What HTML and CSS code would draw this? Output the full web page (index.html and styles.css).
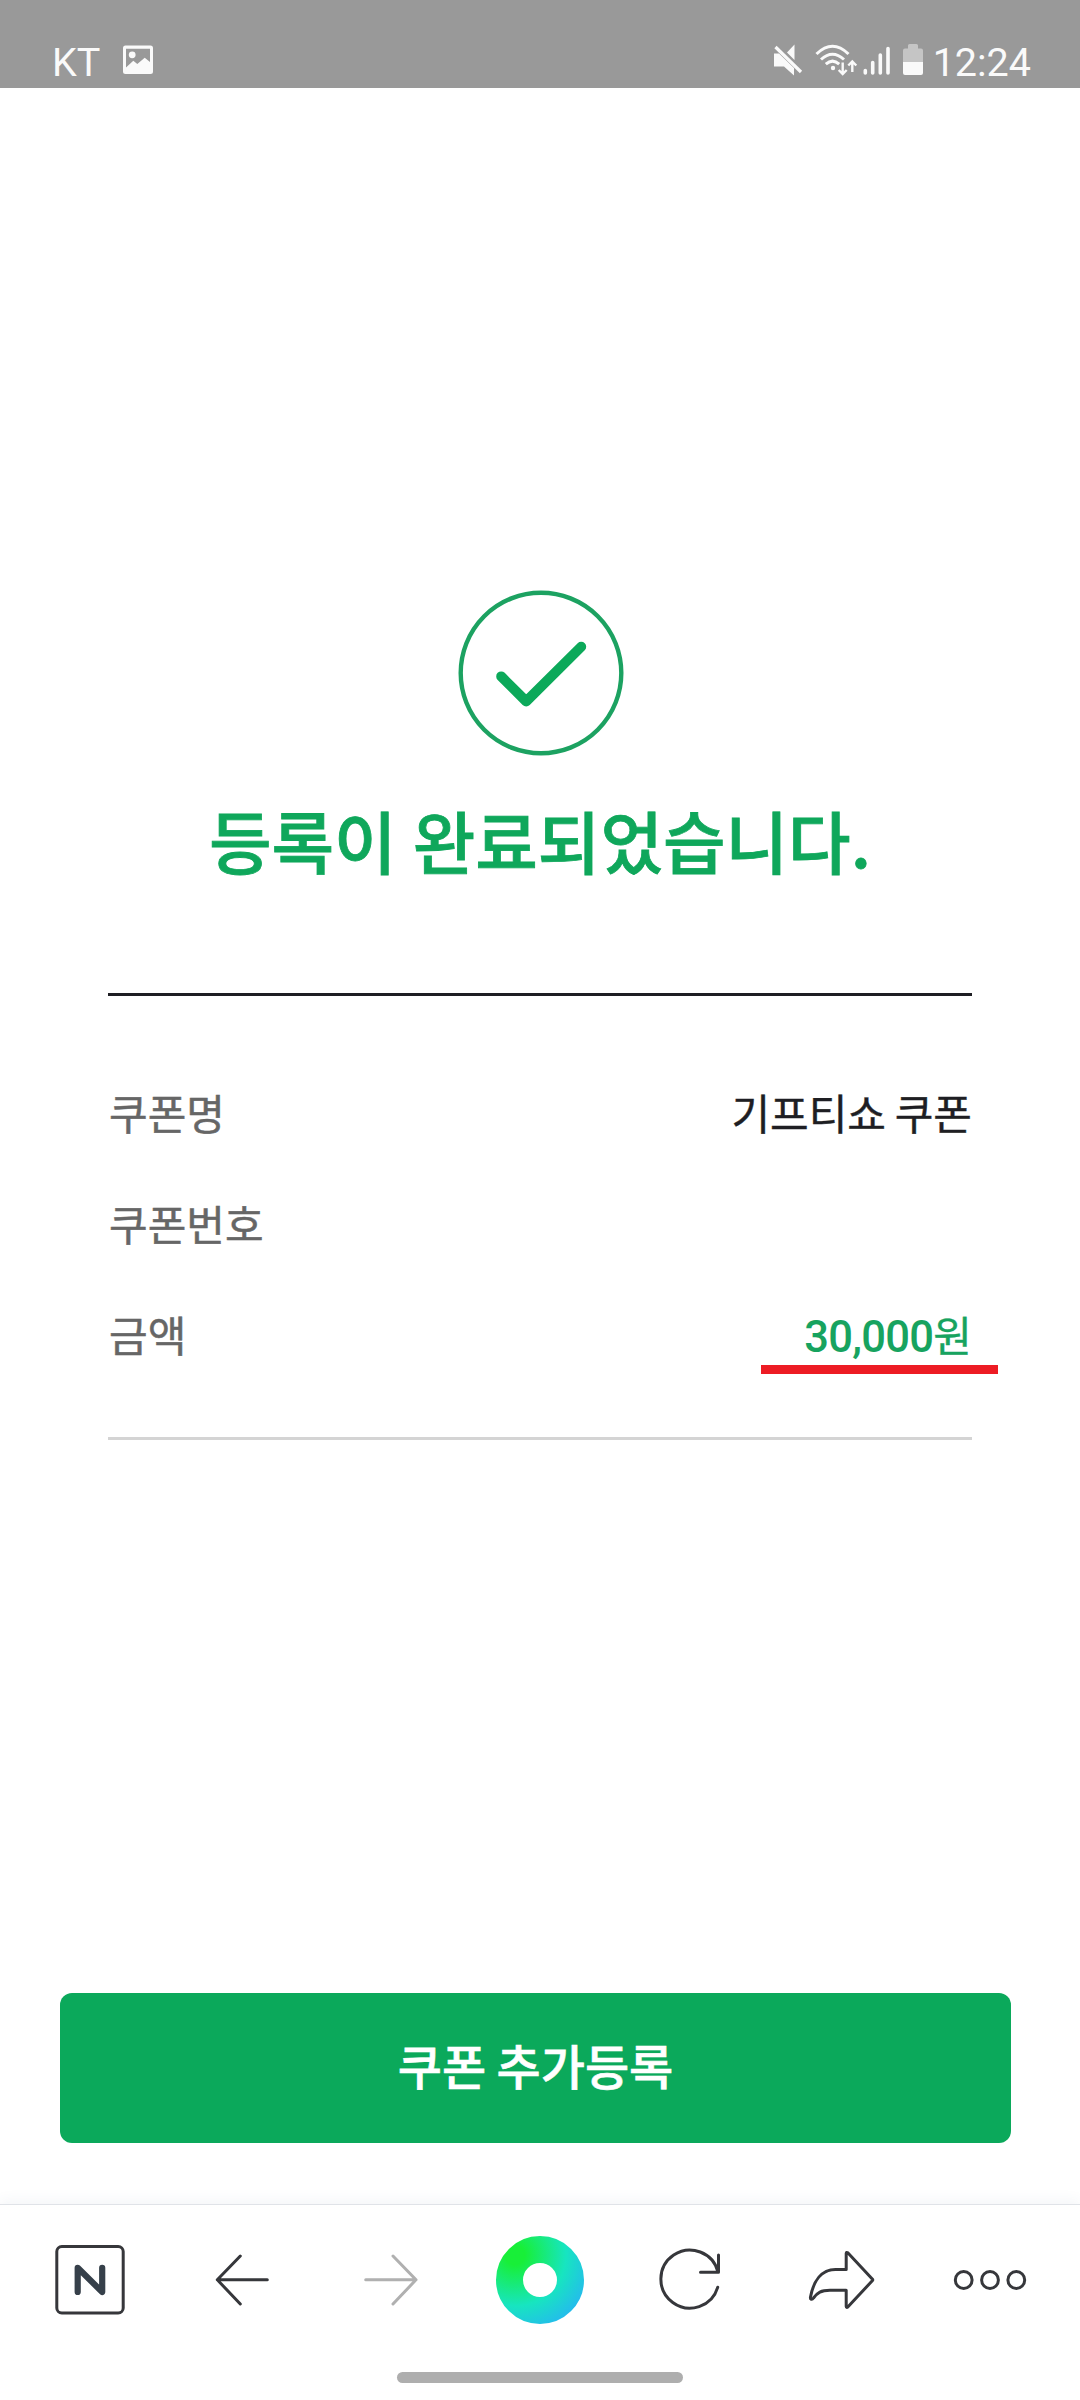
FILE: index.html
```html
<!DOCTYPE html>
<html lang="ko">
<head>
<meta charset="utf-8">
<meta name="viewport" content="width=device-width, initial-scale=1">
<title>등록 완료</title>
<link rel="stylesheet" href="styles.css">
</head>
<body>
<div class="screen">
  <header class="status">
    <span class="carrier">KT</span>
    <svg class="photo" width="32" height="32" viewBox="0 0 32 32">
      <path fill="#fafafa" fill-rule="evenodd" d="M3.500 1.500h25a2.500 2.500 0 0 1 2.500 2.500v23.500a2.500 2.500 0 0 1-2.500 2.500h-25a2.500 2.500 0 0 1-2.500-2.500v-23.500a2.500 2.500 0 0 1 2.500-2.500zM4 4.700V23.500L11.300 16.700L15.300 20L22.700 13.700L28 18V4.700z"/>
      <circle cx="10.200" cy="10.800" r="3.400" fill="#fafafa"/>
    </svg>
    <div class="indicators">
      <svg class="mute" width="30" height="34" viewBox="0 0 30 34" fill="#fafafa">
        <path d="M1 9.500h5L21 24V31.500L11 22.500H1zM21.500 .5V16L14 8.500z"/>
        <path d="M2.500 3L28 28" stroke="#fafafa" stroke-width="3.200"/>
      </svg>
      <svg class="wifi" width="44" height="34" viewBox="0 0 44 34" fill="none" stroke="#fafafa" stroke-width="3">
        <path d="M2.500 10Q18.500-5.500 34.500 10M7 15.500Q18.500 5 30 15.500M11.800 20.200Q18.500 14 25.200 20.200"/>
        <circle cx="19" cy="24" r="2.200" fill="#fafafa" stroke="none"/>
        <path stroke-width="2.400" d="M28.700 18.500V30M24.700 26L28.700 30L32.700 26M38.300 28V17.500M34.300 21.500L38.300 17.500L42.300 21.500"/>
      </svg>
      <svg class="signal" width="28" height="34" viewBox="0 0 28 34" stroke="#fafafa" stroke-width="3.600" stroke-linecap="round">
        <path d="M2.300 26.500V29M9.700 18.500V29M17.300 11V29M25 4.500V29"/>
      </svg>
      <svg class="battery" width="20" height="34" viewBox="0 0 20 34">
        <path fill="#c5c5c5" d="M6.500 0h7a1.500 1.500 0 0 1 1.500 1.500V4.500h3a2 2 0 0 1 2 2V18H0V6.500a2 2 0 0 1 2-2h3V1.500A1.500 1.500 0 0 1 6.500 0z"/>
        <path fill="#fafafa" d="M0 18h20v11a2 2 0 0 1-2 2H2a2 2 0 0 1-2-2z"/>
      </svg>
      <span class="clock">12:24</span>
    </div>
  </header>

  <main class="content">
    <svg class="done" width="166" height="166" viewBox="0 0 166 166" fill="none">
      <circle cx="83" cy="83" r="80.300" stroke="#1ca261" stroke-width="4.400"/>
      <path d="M43.200 86.400L68.200 111.400L123.200 56.800" stroke="#0ca95a" stroke-width="10" stroke-linecap="round" stroke-linejoin="round"/>
    </svg>
    <h1 class="title">등록이 완료되었습니다.</h1>
    <dl class="details">
      <div class="row"><dt>쿠폰명</dt><dd>기프티쇼 쿠폰</dd></div>
      <div class="row"><dt>쿠폰번호</dt><dd></dd></div>
      <div class="row"><dt>금액</dt><dd class="amount"><span class="figure">30,000</span>원</dd></div>
    </dl>
    <button class="add" type="button">쿠폰 추가등록</button>
  </main>

  <nav class="toolbar">
    <svg viewBox="0 0 150 150"><rect x="41.800" y="41.600" width="66.400" height="66.400" rx="5"/><path class="mark" d="M62.700 87V62.800L87.200 87V62.800"/></svg>
    <svg viewBox="0 0 150 150"><path d="M75.300 51L52.300 74.800L75.300 99M52.300 74.800H102.300"/></svg>
    <svg class="disabled" viewBox="0 0 150 150"><path d="M78 51L101 74.800L78 99M101 74.800H50.700"/></svg>
    <svg viewBox="0 0 150 150">
      <defs><radialGradient id="dot" gradientUnits="userSpaceOnUse" cx="50" cy="50" r="82"><stop offset="0.120" stop-color="#18ef38"/><stop offset="0.620" stop-color="#17e5c0"/><stop offset="1" stop-color="#25b8f0"/></radialGradient></defs>
      <circle cx="75" cy="75" r="30.500" style="stroke:url(#dot);stroke-width:27"/>
    </svg>
    <svg viewBox="0 0 150 150"><path d="M102.700 82.300A29 29 0 1 1 103 67M103.500 50V67.300H85.500"/></svg>
    <svg viewBox="0 0 150 150"><path d="M81.200 64.500V48.500Q81.400 46.800 82.800 47.800L107.500 74.200Q108 74.900 107.500 75.500L82.800 102Q81.400 103 81.200 101.400V85.300H65C56 85.300 52.500 87.500 48.500 93C47 95.200 45 94.500 45.500 92C48.500 76 56.500 64.500 70.500 64.500Z"/></svg>
    <svg viewBox="0 0 150 150"><circle cx="48.700" cy="75" r="8.400"/><circle cx="75" cy="75" r="8.400"/><circle cx="101.300" cy="75" r="8.400"/></svg>
  </nav>
  <div class="gesture"><span class="handle"></span></div>
</div>
</body>
</html>
```
FILE: styles.css
```css
* { box-sizing: border-box; }
body {
  margin: 0;
  background: #fff;
  font-family: "Noto Sans CJK KR", sans-serif;
}
.screen {
  display: flex;
  flex-direction: column;
  width: 1080px;
  height: 2400px;
  overflow: hidden;
}
.status {
  display: flex;
  align-items: flex-start;
  height: 88px;
  padding: 44px 49px 0 52px;
  background: #999;
  color: #fafafa;
  font: 400 39.5px/37px Roboto, sans-serif;
}
.status svg { display: block; flex: none; }
.carrier { width: 70px; }
.indicators { display: flex; margin-left: auto; }
.mute { margin-right: 11px; }
.wifi { margin-right: 5px; }
.signal { margin-right: 12px; }
.battery { margin-right: 10px; }

.content {
  display: flex;
  flex-direction: column;
  flex: 1;
  padding: 502px 108px 61px;
}
.done { align-self: center; margin-left: 2px; }
.title {
  margin: 34px 0 103px;
  color: #0fa75b;
  font-size: 68px;
  font-weight: 500;
  line-height: 100px;
  text-align: center;
  white-space: nowrap;
  word-spacing: -3px;
  -webkit-text-stroke: 0.8px #0fa75b;
}
.details {
  height: 447px;
  margin: 0;
  padding-top: 60px;
  border-top: 3px solid #1e1e23;
  border-bottom: 3px solid #d4d4d4;
  font-size: 42px;
  line-height: 111px;
}
.row {
  display: flex;
  justify-content: space-between;
  height: 111px;
}
dt { padding-left: 1px; color: #666; -webkit-text-stroke: 0.5px #666; }
dd { margin: 0; color: #1e1e23; word-spacing: -3px; -webkit-text-stroke: 0.4px; }
.amount {
  position: relative;
  color: #17a35f;
}
.figure {
  font-family: Roboto, sans-serif;
  font-size: 43.5px;
  font-weight: 500;
  letter-spacing: -0.7px;
  -webkit-text-stroke: 0;
}
.amount::after {
  content: "";
  position: absolute;
  right: -26px;
  top: 87px;
  width: 237px;
  height: 9px;
  background: #ed1c24;
}
.add {
  width: 951px;
  height: 150px;
  margin: auto 0 0 -48px;
  padding: 0 0 8px;
  border: 0;
  border-radius: 12px;
  background: #0ba95b;
  color: #fff;
  font: 500 48px/1 "Noto Sans CJK KR", sans-serif;
  word-spacing: -3px;
  -webkit-text-stroke: 0.6px #fff;
}

.toolbar {
  display: grid;
  grid-template-columns: repeat(7, 150px);
  height: 151px;
  padding: 0 15px;
  border-top: 1px solid #e0e3e8;
  box-shadow: 0 -2px 14px rgba(60, 80, 130, .07);
}
.toolbar svg {
  width: 150px;
  height: 150px;
  fill: none;
  stroke: #36373b;
  stroke-width: 3;
  stroke-linecap: round;
  stroke-linejoin: round;
}
.toolbar .mark { stroke: #36404a; stroke-width: 6.200; }
.toolbar .disabled { stroke: #b0b0b0; }
.gesture {
  z-index: 1;
  display: flex;
  justify-content: center;
  height: 45px;
  padding-top: 17px;
  background: #fff;
}
.handle {
  width: 286px;
  height: 11px;
  border-radius: 6px;
  background: #aeaeae;
}
```
